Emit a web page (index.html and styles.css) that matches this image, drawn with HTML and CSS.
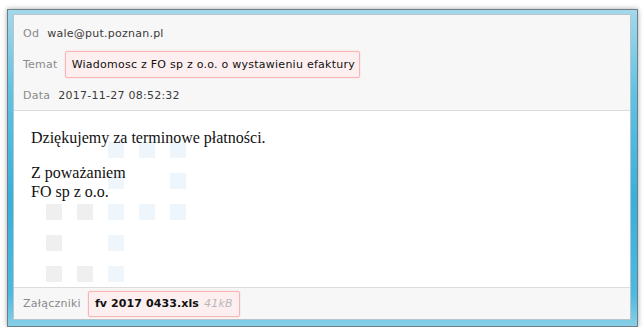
FILE: index.html
```html
<!DOCTYPE html>
<html lang="pl">
<head>
<meta charset="utf-8">
<title>Wiadomość</title>
<link rel="stylesheet" href="styles.css">
</head>
<body>
<div class="window">
  <div class="pane">
    <div class="header">
      <div class="row"><span class="label">Od</span><span class="value">wale@put.poznan.pl</span></div>
      <div class="row"><span class="label">Temat</span><span class="chip">Wiadomosc z FO sp z o.o. o wystawieniu efaktury</span></div>
      <div class="row row-last"><span class="label">Data</span><span class="value">2017-11-27 08:52:32</span></div>
    </div>
    <div class="body">
      <div class="watermark" aria-hidden="true">
        <i></i><i></i><i class="b"></i><i class="b"></i><i class="b"></i>
        <i></i><i></i><i class="b"></i><i></i><i class="b"></i>
        <i class="g"></i><i class="g"></i><i class="b"></i><i class="b"></i><i class="b"></i>
        <i class="g"></i><i></i><i class="b"></i><i></i><i></i>
        <i class="g"></i><i class="g"></i><i class="b"></i><i></i><i></i>
      </div>
      <div class="message">
        <p>Dziękujemy za terminowe płatności.</p>
        <p>Z poważaniem<br>FO sp z o.o.</p>
      </div>
    </div>
    <div class="footer">
      <span class="label">Załączniki</span>
      <span class="chip attach"><b>fv 2017 0433.xls</b><em>41kB</em></span>
    </div>
  </div>
</div>
</body>
</html>
```
FILE: styles.css
```css
html, body {
  margin: 0;
  padding: 0;
  background: #ffffff;
}
body {
  padding: 9px 0 0 7px;
  font-family: "DejaVu Sans", Verdana, sans-serif;
  font-size: 11px;
  letter-spacing: 0.25px;
}
.window {
  width: 631px;
  height: 318px;
  box-sizing: border-box;
  border: 1px solid #6f7f87;
  padding: 4px 6px 6px 5px;
  background: linear-gradient(to bottom, #a3d8ea 0%, #62c3e4 25%, #36b0dc 60%, #4cbae2 90%, #88cfe6 100%);
  box-shadow: 0 0 5px rgba(0, 0, 0, 0.35);
}
.pane {
  height: 100%;
  box-sizing: border-box;
  border: 1px solid #b8c6cc;
  background: #ffffff;
  display: flex;
  flex-direction: column;
}
.header {
  background: #f7f7f7;
  border-bottom: 1px solid #dcdcdc;
  padding: 3px 0 0 9px;
}
.row {
  height: 31px;
  display: flex;
  align-items: center;
  gap: 8px;
}
.row-last {
  height: 30px;
}
.label {
  color: #8a8a8a;
}
.value {
  color: #3a3a3a;
}
.chip {
  display: inline-flex;
  align-items: center;
  height: 27px;
  box-sizing: border-box;
  padding: 0 4px 0 6px;
  margin-left: -1px;
  background: #fdefef;
  border: 1px solid #f6b6b6;
  border-radius: 2px;
  box-shadow: 0 0 2px #fbcccc;
  color: #111111;
}
.body {
  flex: 1;
  position: relative;
  background: #ffffff;
}
.watermark {
  position: absolute;
  left: 32px;
  top: 31px;
  display: grid;
  grid-template-columns: repeat(5, 16px);
  grid-auto-rows: 16px;
  gap: 15px;
}
.watermark i.g {
  background: #efefef;
}
.watermark i.b {
  background: #eef5fb;
}
.message {
  position: relative;
  padding: 1px 17px 0;
  font-family: "Liberation Serif", "Times New Roman", serif;
  font-size: 16px;
  line-height: 19px;
  letter-spacing: 0;
  color: #111111;
}
.message p {
  margin: 16px 0;
}
.footer {
  height: 31px;
  background: #f7f7f7;
  border-top: 1px solid #dcdcdc;
  padding-left: 9px;
  display: flex;
  align-items: center;
  gap: 8px;
}
.attach {
  height: 26px;
  padding: 0 6px;
}
.attach b {
  font-weight: bold;
  color: #111111;
  letter-spacing: 0.1px;
}
.attach em {
  color: #b8b8b8;
  font-style: italic;
  margin-left: 5px;
}
```
